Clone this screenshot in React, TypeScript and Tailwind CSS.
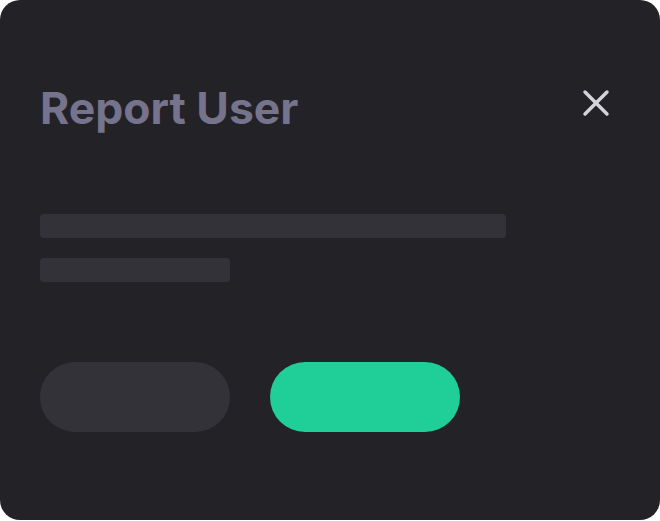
import React from 'react';

const CloseIcon = () => (
  <svg width="28" height="28" viewBox="0 0 28 28" fill="none">
    <path d="M3 3L25 25M25 3L3 25" stroke="#d4d3da" strokeWidth="3.5" strokeLinecap="round" />
  </svg>
);

export default function App() {
  return (
    <div className="bg-white w-[660px] h-[521px]">
      <div className="w-[660px] h-[520px] rounded-[20px] bg-[#232227] px-10 flex flex-col font-['Inter',sans-serif]">
        <div className="flex items-center justify-between mt-[84px] h-[48px]">
          <h1 className="text-[44.5px] leading-none font-bold text-[#76738c]">Report User</h1>
          <button className="mr-[10px] -mt-[10px]">
            <CloseIcon />
          </button>
        </div>
        <div className="mt-[82px] flex flex-col gap-5">
          <div className="w-[466px] h-6 rounded bg-[#333238]" />
          <div className="w-[190px] h-6 rounded bg-[#333238]" />
        </div>
        <div className="mt-20 flex gap-10">
          <button className="w-[190px] h-[70px] rounded-full bg-[#333238]" />
          <button className="w-[190px] h-[70px] rounded-full bg-[#20ce98]" />
        </div>
      </div>
    </div>
  );
}
